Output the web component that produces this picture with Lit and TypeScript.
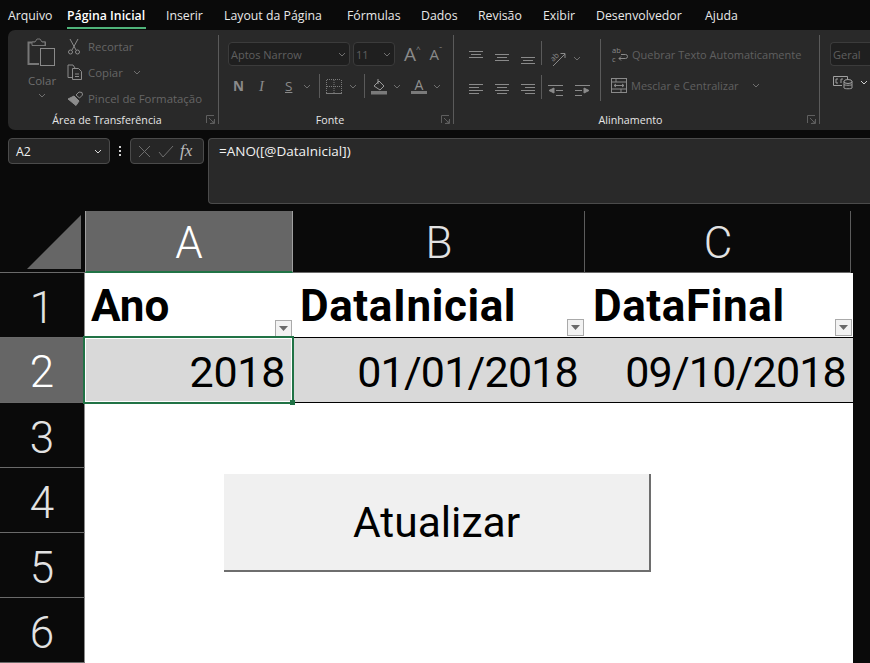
import { LitElement, html, css, svg } from 'lit';
import { customElement } from 'lit/decorators.js';

const chevron = (c = '#6f6f6f') => html`<svg class="chev" width="8" height="5" viewBox="0 0 8 5"><path d="M1 1l3 3 3-3" fill="none" stroke=${c} stroke-width="1"/></svg>`;

const launcher = html`<svg class="launcher" width="9" height="9" viewBox="0 0 9 9" fill="none" stroke="#5f5f5f"><path d="M.5 8V.5H8M8.5 4v4.5H4M3 3l5 5M8 5.500v2.500H5.500"/></svg>`;

// horizontal line stacks for the alignment group
const lines = (rows: [number, number, number][], w = 16, h = 14) =>
  html`<svg width=${w} height=${h} viewBox="0 0 ${w} ${h}" stroke="#8a8a8a" fill="none">${rows.map(([x1, x2, y]) => svg`<path d="M${x1} ${y + 0.5}H${x2}"/>`)}</svg>`;

const TABS = ['Arquivo', 'Página Inicial', 'Inserir', 'Layout da Página', 'Fórmulas', 'Dados', 'Revisão', 'Exibir', 'Desenvolvedor', 'Ajuda'];
const TAB_WIDTHS = [39, 79, 38, 103, 54, 37, 45, 33, 89, 34];

@customElement('app-root')
export class AppRoot extends LitElement {
  static styles = css`
    :host {
      display: block;
      width: 870px;
      height: 663px;
      overflow: hidden;
      background: #0a0a0a;
      font-family: 'Open Sans', 'Noto Sans', sans-serif;
      font-size: 11px;
      color: #6e6e6e;
    }
    svg { display: block; flex: none; }

    .tabs { display: flex; gap: 20px; height: 30px; padding-left: 8px; box-sizing: border-box; }
    .tab { font-size: 12.300px; color: #e8e8e8; line-height: 31px; height: 27px; white-space: nowrap; }
    .tab.on { color: #fff; font-weight: 600; border-bottom: 2px solid #4fb37a; }

    .ribbon {
      display: flex;
      height: 100px;
      margin-left: 8px;
      background: #292929;
      border-radius: 7px 0 0 7px;
      overflow: hidden;
    }
    .group {
      position: relative;
      flex: none;
      box-sizing: border-box;
      height: 100%;
      padding-top: 12px;
    }
    .group::after {
      content: '';
      position: absolute;
      right: 0;
      top: 5px;
      bottom: 6px;
      width: 1px;
      background: #5a5a5a;
    }
    .glabel {
      position: absolute;
      left: 0;
      right: 13px;
      bottom: 3px;
      text-align: center;
      color: #e6e6e6;
      font-size: 10.700px;
      line-height: 14px;
    }
    .launcher { position: absolute; right: 4px; bottom: 6px; }

    .clip { display: flex; padding-left: 19px; width: 211px; }
    .colar { width: 30px; display: flex; flex-direction: column; align-items: center; margin-top: -4px; }
    .colar span { margin-top: 5px; line-height: 16px; font-size: 11.500px; }
    .colar .chev { margin-top: 4px; }
    .small-col { margin-left: 12px; display: flex; flex-direction: column; margin-top: -9px; }
    .small { display: flex; align-items: center; height: 26px; font-size: 11.400px; white-space: nowrap; color: #666; }
    .small .ic { width: 19px; margin-left: -2px; margin-right: 2px; }
    .small .chev { margin-left: 10px; }

    .combo {
      box-sizing: border-box;
      height: 24px;
      border: 1px solid #3b3b3b;
      border-radius: 4px;
      background: #1f1f1f;
      display: flex;
      align-items: center;
      justify-content: space-between;
      padding: 0 3px 0 2px;
      font-size: 11px;
      color: #5f5f5f;
    }
    .combo.name { width: 122px; }
    .combo.size { width: 42px; }
    .combo.geral { width: 60px; border-right: none; border-radius: 4px 0 0 4px; }
    .row { display: flex; align-items: center; }

    .font { width: 235px; padding-left: 9px; }
    .font .row1 { gap: 3px; height: 24px; }
    .grow { margin-left: 6px; font-size: 19px; color: #8a8a8a; line-height: 22px; display: flex; }
    .grow.down { font-size: 15px; }
    .grow small { font-size: 8px; line-height: 11px; }
    .font .row2 { height: 24px; margin-top: 8px; padding-left: 5px; gap: 0; }
    .sep { width: 1px; height: 24px; background: #5a5a5a; flex: none; }
    .font .sep { margin: 0 6px 0 7px; }
    .font .sep.first { margin-left: 8px; }
    .gap6 { width: 6px; flex: none; }
    .gap7 { width: 7px; flex: none; }
    .gap10 { width: 10px; flex: none; }
    .btn-n { width: 26px; font-weight: 700; font-size: 13.500px; color: #8a8a8a; }
    .btn-i { width: 26px; font-family: 'Liberation Serif', serif; font-style: italic; font-size: 15px; color: #8a8a8a; }
    .btn-s { width: 18px; text-decoration: underline; font-size: 13.500px; color: #8a8a8a; }
    .font-color { width: 16px; text-align: center; line-height: 13px; font-size: 14px; color: #909090; border-bottom: 3px solid #7a7a7a; }

    .align { width: 366px; padding-left: 14px; }
    .align-wrap { display: flex; }
    .al-grid { display: grid; grid-template-columns: repeat(3, 26px); align-items: center; height: 56px; grid-auto-rows: 32px; margin-top: -1px; }
    .sep-col { display: flex; flex-direction: column; justify-content: space-between; height: 58px; margin-top: -1px; margin-left: -5px; margin-right: 6px; }
    .al-right { display: flex; flex-direction: column; }
    .al-right .row { height: 32px; gap: 7px; }
    .al-right .row.indent { gap: 12px; }
    .wrap-col { margin-left: 10px; border-left: 1px solid #5a5a5a; height: 62px; padding-left: 10px; margin-top: -3px; display: flex; flex-direction: column; }
    .wrap-col .row { height: 32px; white-space: nowrap; font-size: 11px; color: #606060; gap: 3px; }
    .wrap-col .row + .row { margin-top: 1px; }
    .merge { margin-left: 1px; }
    .icon-text { overflow: visible; }

    .number { flex: 1; padding-left: 10px; }
    .number .row { margin-top: 9px; gap: 6px; padding-left: 3px; }

    .fbar { display: flex; margin-top: 8px; height: 66px; }
    .namebox {
      box-sizing: border-box;
      margin-left: 8px;
      width: 102px;
      height: 26px;
      border: 1px solid #4b4b4b;
      border-radius: 4px;
      background: #262626;
      color: #f0f0f0;
      font-size: 12.300px;
      display: flex;
      align-items: center;
      justify-content: space-between;
      padding: 0 7px;
    }
    .dots { width: 20px; display: flex; flex-direction: column; align-items: center; gap: 2px; padding-top: 8px; }
    .dots i { width: 2px; height: 2px; background: #d0d0d0; }
    .fx {
      box-sizing: border-box;
      width: 74px;
      height: 26px;
      border: 1px solid #4b4b4b;
      border-radius: 4px;
      background: #262626;
      display: flex;
      align-items: center;
      padding: 0 4px 0 6px;
      gap: 6px;
      font-family: 'Liberation Serif', serif;
      font-style: italic;
      font-size: 17px;
      color: #bbb;
    }
    .formula {
      box-sizing: border-box;
      flex: 1;
      margin-left: 4px;
      background: #292929;
      border: 1px solid #4b4b4b;
      border-right: none;
      border-radius: 4px 0 0 4px;
      color: #f2f2f2;
      font-size: 13.500px;
      padding: 4px 10px;
      line-height: 16px;
    }

    .sheet {
      display: grid;
      margin-top: 7px;
      grid-template-columns: 85px 208px 292px 266px 2px;
      grid-template-rows: 62px repeat(6, 65px);
      font-family: Roboto, sans-serif;
    }
    .corner { border-bottom: 1px solid #6a6a6a; box-sizing: border-box; position: relative; }
    .corner svg { position: absolute; left: 27px; top: 4px; }
    .col, .rowh {
      display: flex;
      align-items: center;
      justify-content: center;
      font-size: 44px;
      font-weight: 300;
      color: #e2e2e2;
      box-sizing: border-box;
    }
    .col { border-right: 1px solid #5c5c5c; border-bottom: 1px solid #6a6a6a; padding: 3px 0 0 1px; }
    .col.sel { background: #666; color: #fff; border-right-color: #a0a0a0; border-left: 1px solid #a0a0a0; border-bottom: 2px solid #217346; padding-left: 0; }
    .rowh { border-bottom: 1px solid #6a6a6a; border-right: 1px solid #8a8a8a; padding-top: 5px; }
    .rowh.sel { background: #666; color: #fff; padding-top: 3px; }
    .cell { background: #fff; position: relative; box-sizing: border-box; color: #000; }
    .wide { grid-column: span 2; }
    .head {
      font-weight: 700;
      font-size: 44px;
      letter-spacing: 0.600px;
      line-height: 66px;
      padding-left: 7px;
      border-bottom: 1px solid #000;
      white-space: nowrap;
    }
    .head.first { border-bottom: none; letter-spacing: 0; padding-left: 6px; }
    .head.wide { padding-left: 8px; }
    .val {
      background: #d9d9d9;
      font-size: 43px;
      letter-spacing: -0.800px;
      line-height: 68px;
      text-align: right;
      padding-right: 7px;
      border-bottom: 1px solid #000;
      white-space: nowrap;
    }
    .a2 { background: #fff; position: relative; }
    .val.active {
      height: 64px;
      outline: 2px solid #217346;
      box-shadow: inset 0 0 0 1px #fff;
      border-bottom: none;
      margin: 0 1px 1px 0;
      letter-spacing: -0.300px;
      z-index: 2;
    }
    .handle {
      position: absolute;
      right: -3px;
      bottom: -3px;
      width: 5px;
      height: 5px;
      background: #217346;
    }
    .filter {
      position: absolute;
      right: 1px;
      bottom: 1px;
      width: 17px;
      height: 17px;
      box-sizing: border-box;
      background: #f2f2f2;
      border: 1px solid #aaa;
      display: flex;
      align-items: center;
      justify-content: center;
    }
    .blank { background: #fff; grid-column: 2 / span 4; grid-row: 4 / span 4; position: relative; }
    .macro {
      position: absolute;
      left: 139px;
      top: 71px;
      width: 427px;
      height: 98px;
      box-sizing: border-box;
      background: #f0f0f0;
      border-right: 2px solid #6e6e6e;
      border-bottom: 2px solid #6e6e6e;
      display: flex;
      align-items: center;
      justify-content: center;
      font-size: 42.500px;
      color: #000;
    }
  `;

  private filterBtn() {
    return html`<div class="filter"><svg width="9" height="5" viewBox="0 0 9 5"><path d="M0 0h9L4.500 5z" fill="#6a6a6a"/></svg></div>`;
  }

  private renderClipboard() {
    return html`<div class="group clip">
      <div class="colar">
        <svg width="30" height="30" viewBox="0 0 30 30" fill="none">
          <path d="M9 4.500H1.500V26H12" stroke="#777" stroke-width="2"/>
          <path d="M18 8V4.500h-4" stroke="#777" stroke-width="2"/>
          <path d="M5 7.500V4h3l2-3h3l2 3h3v3.500z" stroke="#777" fill="#292929"/>
          <rect x="13.500" y="10.500" width="14" height="17" stroke="#8a8a8a"/>
        </svg>
        <span>Colar</span>
        ${chevron()}
      </div>
      <div class="small-col">
        <div class="small"><span class="ic"><svg width="14" height="17" viewBox="0 0 14 17" fill="none" stroke="#8c8c8c"><path d="M3 1l6 11M11 1L5 12"/><circle cx="3.500" cy="14" r="2"/><circle cx="10.500" cy="14" r="2"/></svg></span>Recortar</div>
        <div class="small"><span class="ic"><svg width="16" height="16" viewBox="0 0 16 16" fill="none" stroke="#8c8c8c"><path d="M5 13.500H1V1h5l2 3"/><path d="M5.500 4.500h6l3 3v8h-9z"/><path d="M8 10h4M8 12.500h4"/></svg></span>Copiar${chevron()}</div>
        <div class="small"><span class="ic"><svg width="17" height="15" viewBox="0 0 17 15" fill="none" stroke="#8c8c8c"><path d="M1 8l6-3 5 5-3 4.500z" fill="#8c8c8c"/><path d="M9 4l3-3 3 .500.500 2.500-3 3z"/></svg></span>Pincel de Formatação</div>
      </div>
      <div class="glabel">Área de Transferência</div>
      ${launcher}
    </div>`;
  }

  private renderFont() {
    return html`<div class="group font">
      <div class="row row1">
        <div class="combo name"><span>Aptos Narrow</span>${chevron()}</div>
        <div class="combo size"><span>11</span>${chevron()}</div>
        <div class="grow">A<small>^</small></div>
        <div class="grow down">A<small>ˇ</small></div>
      </div>
      <div class="row row2">
        <span class="btn-n">N</span><span class="btn-i">I</span><span class="btn-s">S</span>
        ${chevron()}
        <span class="sep first"></span>
        <svg width="16" height="15" viewBox="0 0 16 15" fill="none" stroke="#7a7a7a" stroke-dasharray="1 1"><path d="M.5 1v13M8 1v13M15.500 1v13M1 .5h14M1 7.500h14"/><path d="M0 14.500h16" stroke-dasharray="none"/></svg>
        <span class="gap7"></span>${chevron()}
        <span class="sep"></span>
        <svg width="16" height="17" viewBox="0 0 16 17" fill="none"><path d="M3 8l5-5 5 5-4 4z" stroke="#9a9a9a"/><path d="M7 1v5" stroke="#9a9a9a"/><rect y="13" width="16" height="3.500" fill="#7a7a7a"/></svg>
        <span class="gap6"></span>${chevron()}
        <span class="gap10"></span>
        <div class="font-color">A</div>
        <span class="gap6"></span>${chevron()}
      </div>
      <div class="glabel">Fonte</div>
      ${launcher}
    </div>`;
  }

  private renderAlign() {
    const top = lines([[1, 15, 1], [3, 13, 4], [1, 15, 7]]);
    const mid = lines([[1, 15, 4], [3, 13, 7], [1, 15, 10]]);
    const bot = lines([[1, 15, 7], [3, 13, 10], [1, 15, 13]]);
    const left = lines([[1, 15, 2], [1, 11, 5], [1, 15, 8], [1, 11, 11]]);
    const center = lines([[1, 15, 2], [3, 13, 5], [1, 15, 8], [3, 13, 11]]);
    const right = lines([[1, 15, 2], [5, 15, 5], [1, 15, 8], [5, 15, 11]]);
    return html`<div class="group align">
      <div class="align-wrap">
        <div class="al-grid">
          ${top}${mid}${bot}${left}${center}${right}
        </div>
        <div class="sep-col"><span class="sep"></span><span class="sep"></span></div>
        <div class="al-right">
          <div class="row">
            <svg class="icon-text" width="18" height="17" viewBox="0 0 18 17" fill="none" stroke="#8a8a8a">
              <text x="2" y="10" transform="rotate(-45 6 7)" font-size="7.500" fill="#8a8a8a" stroke="none" font-family="Open Sans">ab</text>
              <path d="M5 16L17 4M12.500 3.500H17V8"/>
            </svg>
            ${chevron()}
          </div>
          <div class="row indent">
            <svg width="15" height="11" viewBox="0 0 15 11" fill="none" stroke="#8a8a8a"><path d="M0 .5h15M8 5.500h7M8 10.500h7"/><path d="M6 3L1 5.500 6 8z" fill="#8a8a8a"/></svg>
            <svg width="15" height="11" viewBox="0 0 15 11" fill="none" stroke="#8a8a8a"><path d="M0 .5h15M0 5.500h7M0 10.500h7"/><path d="M9 3l5 2.500L9 8z" fill="#8a8a8a"/></svg>
          </div>
        </div>
        <div class="wrap-col">
          <div class="row"><svg class="icon-text" width="18" height="20" viewBox="0 0 18 20" fill="none" stroke="#8a8a8a">
            <text x="1" y="9" font-size="7.500" fill="#8a8a8a" stroke="none" font-family="Open Sans">ab</text>
            <text x="1" y="18" font-size="7.500" fill="#8a8a8a" stroke="none" font-family="Open Sans">c</text>
            <path d="M8 14.500h6.500a2 2 0 0 0 0-4H10M10 12.500l-2 2 2 2"/>
          </svg>Quebrar Texto Automaticamente</div>
          <div class="row"><svg width="16" height="15" viewBox="0 0 16 15" fill="none" stroke="#8a8a8a"><rect x=".5" y=".5" width="15" height="14"/><path d="M1 4h14M1 11h14M5 .5V4M10 11v4M3 7.500h10M5 6L3 7.500 5 9M11 6l2 1.500L11 9"/></svg><span class="merge">Mesclar e Centralizar</span><span class="gap7"></span>${chevron()}</div>
        </div>
      </div>
      <div class="glabel">Alinhamento</div>
      ${launcher}
    </div>`;
  }

  private renderNumber() {
    return html`<div class="group number">
      <div class="combo geral"><span>Geral</span></div>
      <div class="row">
        <svg width="21" height="15" viewBox="0 0 21 15" fill="none" stroke="#a0a0a0"><path d="M9 10.500H.5V1.500h14v3"/><path d="M5 4H3v4h2M8 8V4h2"/><ellipse cx="15" cy="6.500" rx="4" ry="2"/><path d="M11 6.500v6.500c0 1 8 1 8 0V6.500M11 9.500c0 1 8 1 8 0"/></svg>
        ${chevron('#d0d0d0')}
      </div>
    </div>`;
  }

  render() {
    const rows = [3, 4, 5, 6];
    return html`
      <div class="tabs">
        ${TABS.map((t, i) => html`<div class="tab ${i === 1 ? 'on' : ''}" style="width:${TAB_WIDTHS[i]}px">${t}</div>`)}
      </div>
      <div class="ribbon">
        ${this.renderClipboard()}${this.renderFont()}${this.renderAlign()}${this.renderNumber()}
      </div>
      <div class="fbar">
        <div class="namebox"><span>A2</span>${chevron('#d8d8d8')}</div>
        <div class="dots"><i></i><i></i><i></i></div>
        <div class="fx">
          <svg width="15" height="15" viewBox="0 0 15 15" stroke="#6e6e6e" fill="none"><path d="M2 2l11 11M13 2L2 13"/></svg>
          <svg width="16" height="15" viewBox="0 0 16 15" stroke="#6e6e6e" fill="none"><path d="M1 8l4 5L15 2"/></svg>
          <span>fx</span>
        </div>
        <div class="formula">=ANO([@DataInicial])</div>
      </div>
      <div class="sheet">
        <div class="corner"><svg width="54" height="54"><path d="M54 0v54H0z" fill="#666"/></svg></div>
        <div class="col sel">A</div>
        <div class="col">B</div>
        <div class="col">C</div>
        <div></div>

        <div class="rowh">1</div>
        <div class="cell head first">Ano${this.filterBtn()}</div>
        <div class="cell head">DataInicial${this.filterBtn()}</div>
        <div class="cell head wide">DataFinal${this.filterBtn()}</div>

        <div class="rowh sel">2</div>
        <div class="a2"><div class="cell val active">2018<div class="handle"></div></div></div>
        <div class="cell val">01/01/2018</div>
        <div class="cell val wide">09/10/2018</div>

        ${rows.map((r) => html`<div class="rowh" style="grid-column:1;grid-row:${r + 1}">${r}</div>`)}
        <div class="blank"><div class="macro">Atualizar</div></div>
      </div>
    `;
  }
}

declare global {
  interface HTMLElementTagNameMap {
    'app-root': AppRoot;
  }
}
